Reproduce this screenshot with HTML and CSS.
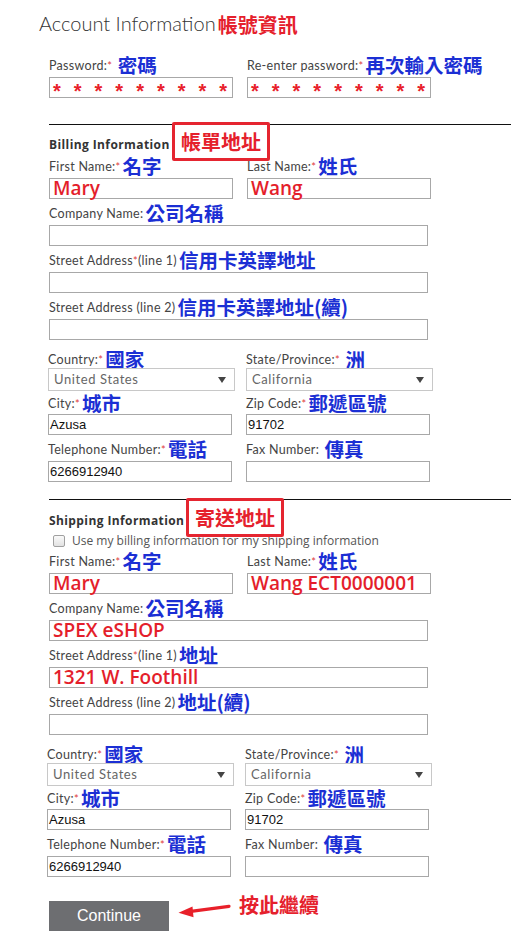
FILE: index.html
```html
<!DOCTYPE html>
<html lang="zh-Hant">
<head>
    <meta charset="UTF-8">
    <meta name="viewport" content="width=device-width, initial-scale=1.0">
    <title>Account Information</title>
    <link rel="stylesheet" href="styles.css">
</head>
<body>
    <div class="page">
        <h1 class="title">Account Information<span class="zh-red">帳號資訊</span></h1>

        <div class="row first-row">
            <div class="col">
                <label class="lbl">Password:<i>*</i> <span class="zh">密碼</span></label>
                <div class="box half pw">*********</div>
            </div>
            <div class="col">
                <label class="lbl">Re-enter password:<i>*</i><span class="zh">再次輸入密碼</span></label>
                <div class="box half pw">*********</div>
            </div>
        </div>

        <hr class="rule">

        <!-- billing -->
        <h2 class="sec">Billing Information<span class="tag tag-bill">帳單地址</span></h2>
        <div class="row">
            <div class="col">
                <label class="lbl">First Name:<i>*</i><span class="zh">名字</span></label>
                <div class="box half red-val">Mary</div>
            </div>
            <div class="col">
                <label class="lbl">Last Name:<i>*</i><span class="zh">姓氏</span></label>
                <div class="box half red-val">Wang</div>
            </div>
        </div>
        <div class="group">
            <label class="lbl">Company Name:<span class="zh">公司名稱</span></label>
            <div class="box full"></div>
        </div>
        <div class="group">
            <label class="lbl">Street Address<i>*</i>(line 1)<span class="zh">信用卡英譯地址</span></label>
            <div class="box full"></div>
        </div>
        <div class="group">
            <label class="lbl">Street Address (line 2)<span class="zh">信用卡英譯地址(續)</span></label>
            <div class="box full"></div>
        </div>
        <div class="row sel-row shift-1">
            <div class="col">
                <label class="lbl">Country:<i>*</i><span class="zh">國家</span></label>
                <div class="select">United States</div>
            </div>
            <div class="col">
                <label class="lbl">State/Province:<i>*</i> <span class="zh">洲</span></label>
                <div class="select">California</div>
            </div>
        </div>
        <div class="row city-row shift-1">
            <div class="col">
                <label class="lbl">City:<i>*</i><span class="zh">城市</span></label>
                <div class="box half plain">Azusa</div>
            </div>
            <div class="col">
                <label class="lbl">Zip Code:<i>*</i><span class="zh">郵遞區號</span></label>
                <div class="box half plain">91702</div>
            </div>
        </div>
        <div class="row shift-1">
            <div class="col">
                <label class="lbl">Telephone Number:<i>*</i><span class="zh">電話</span></label>
                <div class="box half plain">6266912940</div>
            </div>
            <div class="col">
                <label class="lbl">Fax Number: <span class="zh">傳真</span></label>
                <div class="box half plain"></div>
            </div>
        </div>

        <hr class="rule rule-ship">

        <!-- shipping -->
        <h2 class="sec sec-ship">Shipping Information<span class="tag tag-ship">寄送地址</span></h2>
        <label class="same">
            <span class="check"></span>Use my billing information for my shipping information
        </label>
        <div class="row ship-names">
            <div class="col">
                <label class="lbl">First Name:<i>*</i><span class="zh">名字</span></label>
                <div class="box half red-val">Mary</div>
            </div>
            <div class="col">
                <label class="lbl">Last Name:<i>*</i><span class="zh">姓氏</span></label>
                <div class="box half red-val">Wang ECT0000001</div>
            </div>
        </div>
        <div class="group">
            <label class="lbl">Company Name:<span class="zh">公司名稱</span></label>
            <div class="box full red-val">SPEX eSHOP</div>
        </div>
        <div class="group">
            <label class="lbl">Street Address<i>*</i>(line 1)<span class="zh">地址</span></label>
            <div class="box full red-val">1321 W. Foothill</div>
        </div>
        <div class="group">
            <label class="lbl">Street Address (line 2)<span class="zh">地址(續)</span></label>
            <div class="box full"></div>
        </div>
        <div class="row sel-row shift-2">
            <div class="col">
                <label class="lbl">Country:<i>*</i><span class="zh">國家</span></label>
                <div class="select">United States</div>
            </div>
            <div class="col">
                <label class="lbl">State/Province:<i>*</i> <span class="zh">洲</span></label>
                <div class="select">California</div>
            </div>
        </div>
        <div class="row city-row shift-2">
            <div class="col">
                <label class="lbl">City:<i>*</i><span class="zh">城市</span></label>
                <div class="box half plain">Azusa</div>
            </div>
            <div class="col">
                <label class="lbl">Zip Code:<i>*</i><span class="zh">郵遞區號</span></label>
                <div class="box half plain">91702</div>
            </div>
        </div>
        <div class="row shift-2">
            <div class="col">
                <label class="lbl">Telephone Number:<i>*</i><span class="zh">電話</span></label>
                <div class="box half plain">6266912940</div>
            </div>
            <div class="col">
                <label class="lbl">Fax Number: <span class="zh">傳真</span></label>
                <div class="box half plain"></div>
            </div>
        </div>

        <div class="actions">
            <button class="btn">Continue</button>
            <svg class="arrow" width="56" height="20" viewBox="0 0 56 20">
                <line x1="12" y1="11.6" x2="52" y2="6.3" stroke="#e8202a" stroke-width="3.2" stroke-linecap="round"/>
                <polygon points="1.5,12.8 15.5,6.6 16.5,17.2" fill="#e8202a"/>
            </svg>
            <span class="zh-red go">按此繼續</span>
        </div>
    </div>
</body>
</html>
```

FILE: styles.css
```css
body {
    margin: 0;
    background: #fff;
    font-family: Lato, "Noto Sans CJK TC", sans-serif;
    color: #444;
}
.page {
    padding-left: 49px;
}
.title {
    margin: 11px 0 0 -10px;
    font-size: 20px;
    font-weight: 300;
    line-height: 24px;
    color: #333;
}
.zh-red {
    font-family: "Noto Sans CJK TC", sans-serif;
    font-weight: 700;
    color: #e5202c;
    font-size: 20px;
    vertical-align: -2px;
    line-height: 0;
    margin-left: 2px;
}
.row {
    display: flex;
    margin-top: 8px;
}
.col {
    width: 198px;
}
.first-row {
    margin-top: 24px;
}
.group {
    margin-top: 8px;
}
.lbl {
    display: block;
    font-size: 12.5px;
    line-height: 14px;
    height: 14px;
    margin-bottom: 4px;
    letter-spacing: 0.3px;
    color: #444;
    white-space: nowrap;
}
.lbl i {
    font-style: normal;
    color: #e03a3a;
    font-size: 11px;
}
.zh {
    font-family: "Noto Sans CJK TC", sans-serif;
    font-weight: 700;
    font-size: 19.5px;
    line-height: 0;
    color: #1b2fd4;
    vertical-align: -3px;
    margin-left: 2px;
    letter-spacing: 0;
}
.box {
    box-sizing: border-box;
    height: 21px;
    border: 1px solid #a8a8a8;
    background: #fff;
    white-space: nowrap;
}
.half {
    width: 184px;
}
.full {
    width: 379px;
}
.pw {
    font-family: "Liberation Sans", sans-serif;
    font-weight: 700;
    font-size: 20px;
    line-height: 21px;
    letter-spacing: 13px;
    color: #e8202a;
    padding: 3px 0 0 3px;
    overflow: visible;
}
.red-val {
    font-family: "Open Sans", sans-serif;
    font-weight: 600;
    font-size: 19px;
    line-height: 19px;
    padding: 0 0 0 3px;
    color: #e41e2b;
}
.plain {
    font-family: "Liberation Sans", sans-serif;
    font-size: 13px;
    line-height: 19px;
    padding-left: 1px;
    color: #111;
}
.select {
    position: relative;
    box-sizing: border-box;
    width: 187px;
    height: 23px;
    border: 1px solid #c8c8c8;
    padding-left: 5px;
    font-size: 13px;
    line-height: 20px;
    letter-spacing: 0.6px;
    color: #666;
}
.select::after {
    content: "";
    position: absolute;
    right: 8px;
    top: 8px;
    border-left: 4px solid transparent;
    border-right: 4px solid transparent;
    border-top: 6px solid #444;
}
.sel-row {
    margin-top: 13px;
}
.sel-row .lbl {
    margin-bottom: 1px;
}
.city-row {
    margin-top: 6px;
}
.city-row .lbl {
    margin-bottom: 3px;
}
.shift-1 {
    margin-left: -1px;
}
.shift-2 {
    margin-left: -2px;
}
.rule {
    margin: 26px 0 0;
    border: 0;
    border-top: 1px solid #111;
    height: 0;
}
.rule-ship {
    margin-top: 17px;
}
.sec {
    position: relative;
    margin: 13px 0 0;
    font-family: "Open Sans", sans-serif;
    font-size: 12px;
    font-weight: 700;
    line-height: 14px;
    letter-spacing: 0.4px;
    color: #333;
}
.sec-ship {
    margin-top: 14px;
}
.tag {
    position: absolute;
    top: -16px;
    box-sizing: border-box;
    width: 98px;
    height: 39px;
    border: 3px solid #e52530;
    border-radius: 2px;
    background: #fff;
    font-family: "Noto Sans CJK TC", sans-serif;
    font-size: 20px;
    font-weight: 700;
    line-height: 33px;
    letter-spacing: 0;
    text-align: center;
    color: #e5202c;
}
.tag-bill {
    left: 123px;
}
.tag-ship {
    left: 137px;
    top: -16px;
}
.same {
    display: flex;
    align-items: center;
    margin: 6px 0 0 4px;
    font-family: "Open Sans", sans-serif;
    font-size: 12px;
    line-height: 14px;
    letter-spacing: 0;
    color: #555;
}
.check {
    box-sizing: border-box;
    width: 12px;
    height: 12px;
    margin-right: 7px;
    border: 1px solid #a0a0a0;
    border-radius: 2px;
    background: linear-gradient(#fafafa, #e2e2e2);
}
.ship-names {
    margin-top: 7px;
}
.actions {
    display: flex;
    align-items: flex-start;
    margin-top: 24px;
    padding-bottom: 8px;
}
.btn {
    width: 120px;
    height: 30px;
    border: none;
    background: #6d6e71;
    color: #fff;
    font-family: "Liberation Sans", sans-serif;
    font-size: 16px;
    padding: 0;
    cursor: pointer;
}
.arrow {
    margin: -1px 0 0 8px;
}
.go {
    margin: -6px 0 0 6px;
    font-size: 20px;
    line-height: 20px;
    vertical-align: 0;
}
```
